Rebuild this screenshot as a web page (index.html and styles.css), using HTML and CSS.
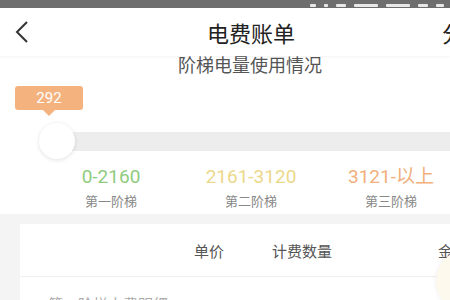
FILE: index.html
```html
<!DOCTYPE html>
<html lang="zh">
<head>
    <meta charset="UTF-8">
    <meta name="viewport" content="width=device-width, initial-scale=1.0">
    <title>电费账单</title>
    <link rel="stylesheet" href="styles.css">
</head>
<body>
    <!-- 状态栏 -->
    <div class="status-bar">
        <span class="sb-icon w6"></span>
        <span class="sb-icon w4"></span>
        <span class="sb-icon w10"></span>
        <span class="sb-icon w24"></span>
        <span class="sb-icon w24"></span>
        <span class="sb-icon w10"></span>
        <span class="sb-icon w8"></span>
    </div>

    <!-- 导航栏 -->
    <div class="nav-bar">
        <svg class="back" width="16" height="24" viewBox="0 0 16 24">
            <path d="M13 2 L3 12 L13 22" fill="none" stroke="#333" stroke-width="2"/>
        </svg>
        <div class="nav-title">电费账单</div>
        <div class="nav-right">分享</div>
    </div>

    <div class="content">
        <div class="section-title">阶梯电量使用情况</div>

        <!-- 阶梯滑块 -->
        <div class="slider">
            <div class="tip">292</div>
            <div class="track">
                <div class="track-fill"></div>
                <div class="thumb"></div>
            </div>
        </div>

        <div class="steps">
            <div class="step">
                <div class="step-num green">0-2160</div>
                <div class="step-name">第一阶梯</div>
            </div>
            <div class="step">
                <div class="step-num yellow">2161-3120</div>
                <div class="step-name">第二阶梯</div>
            </div>
            <div class="step">
                <div class="step-num orange">3121-以上</div>
                <div class="step-name">第三阶梯</div>
            </div>
        </div>

        <!-- 账单明细 -->
        <div class="detail">
            <div class="card">
                <div class="card-head">
                    <span class="col col-price">单价</span>
                    <span class="col col-count">计费数量</span>
                    <span class="col col-more">金</span>
                </div>
                <div class="card-row">第一阶梯电费明细</div>
            </div>
        </div>
    </div>

    <div class="float-btn"></div>
</body>
</html>
```

FILE: styles.css
```css
body {
    margin: 0;
    width: 450px;
    height: 300px;
    overflow: hidden;
    position: relative;
    background: #fff;
    font-family: "Noto Sans CJK SC", "Noto Sans", sans-serif;
    color: #333;
}

/* 状态栏 */
.status-bar {
    height: 8px;
    background: #6e6e6e;
    display: flex;
    justify-content: flex-end;
    align-items: flex-end;
    gap: 8px;
    padding-right: 6px;
}
.sb-icon {
    height: 3px;
    background: #e8e8e8;
    border-radius: 1px;
    margin-bottom: 1px;
}
.w4 { width: 4px; }
.w6 { width: 6px; }
.w8 { width: 8px; }
.w10 { width: 10px; }
.w24 { width: 24px; }

/* 导航栏 */
.nav-bar {
    height: 48px;
    display: flex;
    align-items: center;
    padding-left: 14px;
    background: #fff;
    box-shadow: 0 1px 3px rgba(0, 0, 0, 0.05);
    position: relative;
    z-index: 2;
}
.back {
    flex: none;
}
.nav-title {
    flex: 1;
    text-align: center;
    font-size: 22px;
    color: #222;
    padding-left: 60px;
}
.nav-right {
    width: 8px;
    font-size: 22px;
    color: #222;
    white-space: nowrap;
    overflow: hidden;
    padding-left: 30px;
}

.content {
    overflow: hidden;
}

.section-title {
    margin-top: -5px;
    text-align: center;
    font-size: 18px;
    line-height: 26px;
    color: #555;
    padding-left: 50px;
}

/* 滑块 */
.slider {
    padding-left: 40px;
    margin-top: 9px;
}
.tip {
    position: relative;
    width: 68px;
    height: 24px;
    line-height: 24px;
    margin-left: -25px;
    background: #f4b27f;
    color: #fff;
    border-radius: 3px;
    text-align: center;
    font-family: Roboto, sans-serif;
    font-size: 15px;
}
.tip::after {
    content: "";
    position: absolute;
    left: 28px;
    bottom: -6px;
    border-left: 6px solid transparent;
    border-right: 6px solid transparent;
    border-top: 6px solid #f4b27f;
}
.track {
    position: relative;
    margin-top: 22px;
    height: 19px;
    background: #ededed;
    border-radius: 10px 0 0 10px;
}
.track-fill {
    width: 10px;
    height: 19px;
    background: #9bd48b;
    border-radius: 10px 0 0 10px;
}
.thumb {
    position: absolute;
    left: -1px;
    top: -9px;
    width: 36px;
    height: 36px;
    border-radius: 50%;
    background: #fff;
    box-shadow: 0 1px 4px rgba(0, 0, 0, 0.12);
}

/* 阶梯说明 */
.steps {
    display: flex;
    padding-left: 41px;
    margin-top: 13px;
}
.step {
    flex: none;
    width: 140px;
    text-align: center;
}
.step-num {
    font-family: Roboto, "Noto Sans CJK SC", sans-serif;
    font-size: 19px;
    line-height: 26px;
}
.green { color: #8fcc80; }
.yellow { color: #ecd88a; }
.orange { color: #f1b07c; }
.step-name {
    font-size: 13px;
    line-height: 22px;
    color: #888;
}

/* 明细 */
.detail {
    margin-top: 2px;
    background: #f4f4f4;
    padding: 10px 0 0 20px;
}
.card {
    background: #fff;
}
.card-head {
    height: 52px;
    display: flex;
    align-items: center;
    border-bottom: 1px solid #eee;
    font-size: 15px;
    color: #555;
}
.col {
    flex: none;
    text-align: center;
}
.col-price {
    width: 60px;
    margin-left: 159px;
}
.col-count {
    width: 80px;
    margin-left: 23px;
}
.col-more {
    margin-left: 96px;
    color: #555;
}
.card-row {
    padding: 16px 0 0 28px;
    font-size: 15px;
    color: #aaa;
}

/* 悬浮按钮 */
.float-btn {
    position: absolute;
    left: 436px;
    top: 250px;
    width: 62px;
    height: 62px;
    border-radius: 50%;
    background: #fdf9ec;
    box-shadow: 0 0 4px rgba(0, 0, 0, 0.08);
}
```
